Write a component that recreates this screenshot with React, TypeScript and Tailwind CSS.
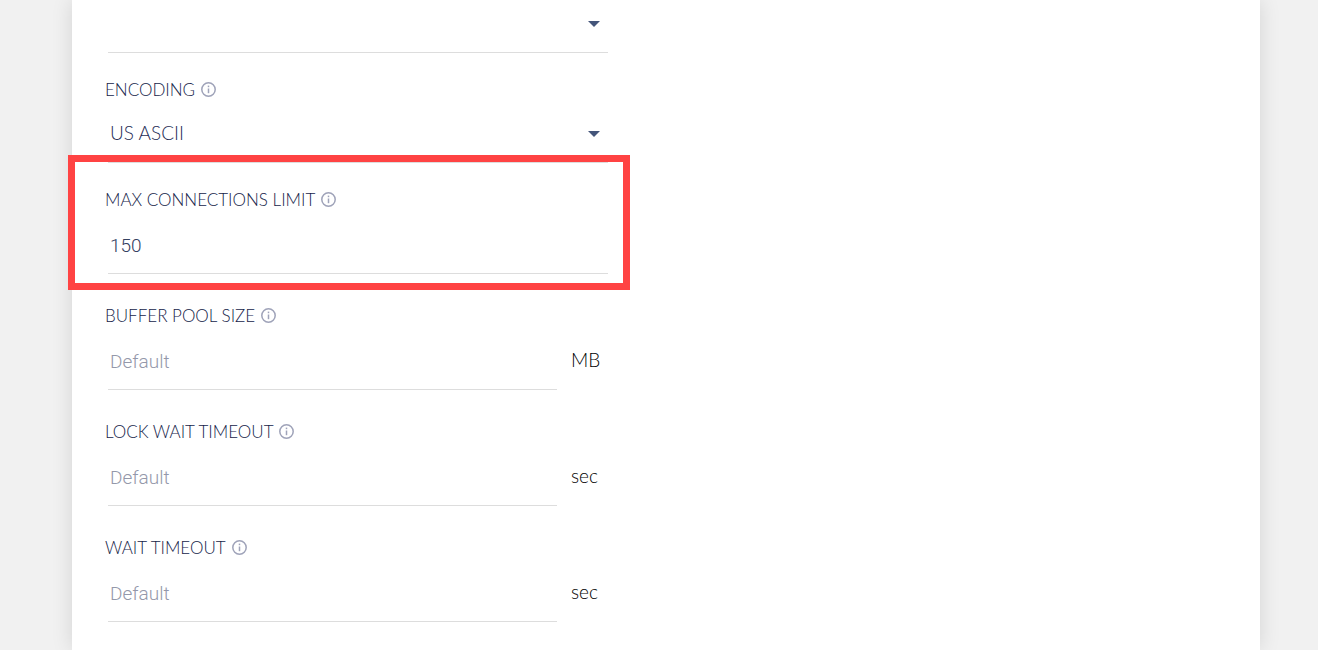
import { useId, useState } from 'react';

const InfoIcon = () => (
  <svg
    className="block h-[15px] w-[15px]"
    viewBox="0 0 15 15"
    fill="none"
    aria-hidden="true"
  >
    <circle cx="7.5" cy="7.5" r="6.7" stroke="currentColor" strokeWidth="1.5" />
    <path d="M7.5 6.5v4.7" stroke="currentColor" strokeWidth="1.5" />
    <path d="M7.5 3.6v1.6" stroke="currentColor" strokeWidth="1.5" />
  </svg>
);

const FieldLabel = ({ id, text }: { id: string; text: string }) => (
  <div className="flex h-5 items-start gap-1.5">
    <label
      htmlFor={id}
      className="text-[17px] font-light leading-5 text-[#16244a]"
    >
      {text}
    </label>
    <button
      type="button"
      aria-label={`About ${text.toLowerCase()}`}
      className="pt-0.5 text-[#9fa3b9]"
    >
      <InfoIcon />
    </button>
  </div>
);

const SelectBox = ({
  id,
  label,
  options,
}: {
  id?: string;
  label?: string;
  options: string[];
}) => (
  <div className="relative ml-[3px]">
    <select
      id={id}
      aria-label={label}
      className="block h-[63px] w-full appearance-none border-b border-[#dddddd] bg-transparent pl-0.5 pt-1 text-[19px] font-light text-[#1f2d56] outline-none"
    >
      {options.map((option) => (
        <option key={option}>{option}</option>
      ))}
    </select>
    <svg
      className="pointer-events-none absolute right-2 top-[31px] h-1.5 w-3 text-[#44557a]"
      viewBox="0 0 12 6"
      aria-hidden="true"
    >
      <path d="M0 0h12L6 6z" fill="currentColor" />
    </svg>
  </div>
);

const TextField = ({
  label,
  initial = '',
  unit,
}: {
  label: string;
  initial?: string;
  unit?: string;
}) => {
  const id = useId();
  const [value, setValue] = useState(initial);

  return (
    <>
      <FieldLabel id={id} text={label} />
      <div className="ml-[3px] flex items-center">
        <input
          id={id}
          type="text"
          placeholder="Default"
          value={value}
          onChange={(e) => setValue(e.target.value)}
          className="h-16 min-w-0 flex-1 border-b border-[#dddddd] bg-transparent pl-0.5 pt-2 font-['Roboto',sans-serif] text-[19px] font-light text-[#34405f] outline-none placeholder:text-[#9498aa]"
        />
        {unit && (
          <span className="w-[51px] pl-3.5 pt-1 text-[19px] font-light text-black">
            {unit}
          </span>
        )}
      </div>
    </>
  );
};

const App = () => {
  const encodingId = useId();

  return (
    <div className="min-h-screen overflow-hidden bg-[#f1f1f1] font-['Lato',sans-serif]">
      <main className="ml-[72px] mr-[58px] flex min-h-screen flex-col bg-white px-[33px] shadow-[0_0_20px_rgba(0,0,0,0.12)]">
        <form className="-mt-2.5 w-full max-w-[503px]">
          <SelectBox label="Language" options={['']} />
          <div className="pt-[27px]">
            <FieldLabel id={encodingId} text="ENCODING" />
            <SelectBox id={encodingId} options={['US ASCII', 'UTF-8']} />
          </div>
          <div className="relative pt-[27px]">
            <TextField label="MAX CONNECTIONS LIMIT" initial="150" />
            <div className="pointer-events-none absolute -bottom-4 -left-[37px] -right-[22px] -top-2 border-[7px] border-[#ff4343]" />
          </div>
          <div className="pt-8">
            <TextField label="BUFFER POOL SIZE" unit="MB" />
          </div>
          <div className="pt-8">
            <TextField label="LOCK WAIT TIMEOUT" unit="sec" />
          </div>
          <div className="pt-8">
            <TextField label="WAIT TIMEOUT" unit="sec" />
          </div>
        </form>
      </main>
    </div>
  );
};

export default App;
